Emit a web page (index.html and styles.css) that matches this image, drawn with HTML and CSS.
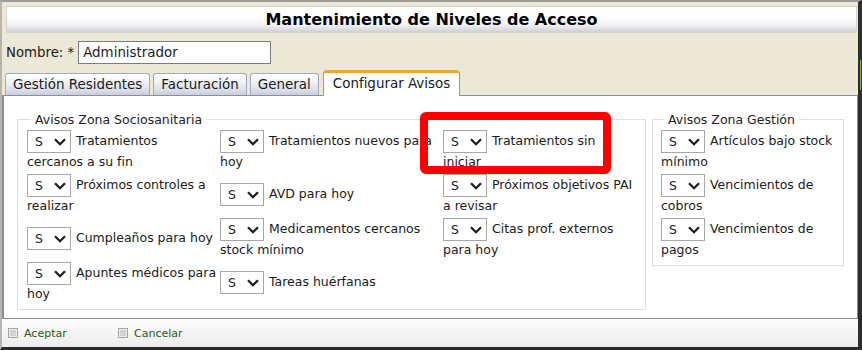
FILE: index.html
```html
<!DOCTYPE html>
<html lang="es">
<head>
    <meta charset="UTF-8">
    <title>Mantenimiento de Niveles de Acceso</title>
    <link rel="stylesheet" href="styles.css">
</head>
<body>
    <div class="window">
        <!-- Title -->
        <div class="titlebar">
            <h1>Mantenimiento de Niveles de Acceso</h1>
        </div>

        <!-- Nombre -->
        <div class="name-row">
            <label for="nombre">Nombre: *</label>
            <input id="nombre" type="text" value="Administrador">
        </div>

        <!-- Tabs -->
        <div class="tabs">
            <span class="tab">Gestión Residentes</span>
            <span class="tab">Facturación</span>
            <span class="tab">General</span>
            <span class="tab active">Configurar Avisos</span>
        </div>

        <!-- Tab content -->
        <div class="panel">
            <fieldset class="zone zone-socio">
                <legend>Avisos Zona Sociosanitaria</legend>
                <table class="alerts">
                    <colgroup>
                        <col class="c1"><col class="c2"><col class="c3">
                    </colgroup>
                    <tr>
                        <td><span class="sel"><select><option>S</option><option>N</option></select><svg width="12" height="8" viewBox="0 0 12 8"><path d="M1 1.2 L6 6.2 L11 1.2"/></svg></span> Tratamientos cercanos a su fin</td>
                        <td><span class="sel"><select><option>S</option><option>N</option></select><svg width="12" height="8" viewBox="0 0 12 8"><path d="M1 1.2 L6 6.2 L11 1.2"/></svg></span> Tratamientos nuevos para hoy</td>
                        <td><span class="sel"><select><option>S</option><option>N</option></select><svg width="12" height="8" viewBox="0 0 12 8"><path d="M1 1.2 L6 6.2 L11 1.2"/></svg></span> Tratamientos sin iniciar</td>
                    </tr>
                    <tr>
                        <td><span class="sel"><select><option>S</option><option>N</option></select><svg width="12" height="8" viewBox="0 0 12 8"><path d="M1 1.2 L6 6.2 L11 1.2"/></svg></span> Próximos controles a realizar</td>
                        <td><span class="sel"><select><option>S</option><option>N</option></select><svg width="12" height="8" viewBox="0 0 12 8"><path d="M1 1.2 L6 6.2 L11 1.2"/></svg></span> AVD para hoy</td>
                        <td><span class="sel"><select><option>S</option><option>N</option></select><svg width="12" height="8" viewBox="0 0 12 8"><path d="M1 1.2 L6 6.2 L11 1.2"/></svg></span> Próximos objetivos PAI a revisar</td>
                    </tr>
                    <tr>
                        <td><span class="sel"><select><option>S</option><option>N</option></select><svg width="12" height="8" viewBox="0 0 12 8"><path d="M1 1.2 L6 6.2 L11 1.2"/></svg></span> Cumpleaños para hoy</td>
                        <td><span class="sel"><select><option>S</option><option>N</option></select><svg width="12" height="8" viewBox="0 0 12 8"><path d="M1 1.2 L6 6.2 L11 1.2"/></svg></span> Medicamentos cercanos stock mínimo</td>
                        <td><span class="sel"><select><option>S</option><option>N</option></select><svg width="12" height="8" viewBox="0 0 12 8"><path d="M1 1.2 L6 6.2 L11 1.2"/></svg></span> Citas prof. externos para hoy</td>
                    </tr>
                    <tr>
                        <td><span class="sel"><select><option>S</option><option>N</option></select><svg width="12" height="8" viewBox="0 0 12 8"><path d="M1 1.2 L6 6.2 L11 1.2"/></svg></span> Apuntes médicos para hoy</td>
                        <td><span class="sel"><select><option>S</option><option>N</option></select><svg width="12" height="8" viewBox="0 0 12 8"><path d="M1 1.2 L6 6.2 L11 1.2"/></svg></span> Tareas huérfanas</td>
                        <td></td>
                    </tr>
                </table>
            </fieldset>

            <fieldset class="zone zone-gestion">
                <legend>Avisos Zona Gestión</legend>
                <table class="alerts">
                    <tr>
                        <td><span class="sel"><select><option>S</option><option>N</option></select><svg width="12" height="8" viewBox="0 0 12 8"><path d="M1 1.2 L6 6.2 L11 1.2"/></svg></span> Artículos bajo stock mínimo</td>
                    </tr>
                    <tr>
                        <td><span class="sel"><select><option>S</option><option>N</option></select><svg width="12" height="8" viewBox="0 0 12 8"><path d="M1 1.2 L6 6.2 L11 1.2"/></svg></span> Vencimientos de cobros</td>
                    </tr>
                    <tr>
                        <td><span class="sel"><select><option>S</option><option>N</option></select><svg width="12" height="8" viewBox="0 0 12 8"><path d="M1 1.2 L6 6.2 L11 1.2"/></svg></span> Vencimientos de pagos</td>
                    </tr>
                </table>
            </fieldset>
        </div>

        <!-- Footer -->
        <div class="footer">
            <a class="action" href="#"><span class="ico"></span>Aceptar</a>
            <a class="action" href="#"><span class="ico"></span>Cancelar</a>
        </div>
    </div>

    <!-- Highlight mark -->
    <div class="highlight"></div>
</body>
</html>
```

FILE: styles.css
```css
* {
    box-sizing: border-box;
}

body {
    margin: 0;
    position: relative;
    background: #ebe8d8;
    font-family: "DejaVu Sans", Verdana, sans-serif;
    color: #1a1a1a;
}

.window {
    position: relative;
    height: 350px;
    display: flex;
    flex-direction: column;
    border-top: 2px solid #9c9c9c;
    border-left: 2px solid #b8b6aa;
    border-right: 4px solid #2e2e2e;
    border-bottom: 3px solid #2a2a2a;
}

/* green mark on the right frame */
.window::after {
    content: "";
    position: absolute;
    right: -3px;
    top: 58px;
    width: 1px;
    height: 30px;
    background: #7cc11e;
}

.titlebar {
    margin: 4px 1px 0 4px;
    height: 27px;
    border: 1px solid #d6d4ca;
    background: linear-gradient(#ffffff 0%, #ffffff 45%, #eeeef0 75%, #cfd0d6 100%);
    display: flex;
    align-items: center;
    justify-content: center;
}

.titlebar h1 {
    margin: 0;
    font-size: 16px;
    font-weight: bold;
    color: #000;
}

.name-row {
    margin-top: 8px;
    padding-left: 4px;
    height: 23px;
    display: flex;
    align-items: center;
    font-size: 13.3px;
}

.name-row label {
    margin-right: 4px;
}

.name-row input {
    width: 193px;
    height: 23px;
    border: 1px solid #7c7c7c;
    padding: 0 4px;
    font-family: inherit;
    font-size: 13.4px;
    color: #1a1a1a;
    background: #fff;
}

/* Tabs */
.tabs {
    margin-top: 6px;
    height: 26px;
    padding-left: 3px;
    display: flex;
    align-items: flex-end;
    gap: 3px;
    border-bottom: 1px solid #8e8e8e;
    position: relative;
}

.tab {
    height: 22px;
    line-height: 21px;
    padding: 0 7px;
    font-size: 13.45px;
    border: 1px solid #a4a9bb;
    border-bottom: none;
    border-radius: 3px 3px 0 0;
    background: linear-gradient(#ffffff 0%, #eef0f6 45%, #d8dbe8 80%, #c9cddd 100%);
    color: #1a1a1a;
}

.tab.active {
    height: 26px;
    margin-bottom: -1px;
    margin-left: 1px;
    line-height: 22px;
    padding: 0 9px;
    background: #fff;
    border: 1px solid #9a9a9a;
    border-top: 3px solid #f6a52a;
    border-bottom: none;
    border-radius: 4px 4px 0 0;
}

.panel {
    flex: 1;
    background: #fff;
    border-left: 2px solid #8c8c8c;
    border-right: 1px solid #8c8c8c;
    border-bottom: 1px solid #8c8c8c;
    padding: 16px 0 0 13px;
    display: flex;
    align-items: flex-start;
    gap: 6px;
}

/* Fieldsets */
.zone {
    margin: 0;
    border: 1px solid #dedede;
    font-size: 12.5px;
}

.zone legend {
    line-height: 15px;
    color: #222;
}

.zone-socio {
    width: 629px;
    padding: 3px 8px 3px 9px;
}

.zone-socio legend {
    margin-left: 4px;
    padding: 0 4px;
}

.zone-gestion {
    width: 192px;
    padding: 3px 7px 3px 8px;
}

.zone-gestion legend {
    margin-left: 3px;
    padding: 0 4px;
}

.alerts {
    border-collapse: collapse;
    table-layout: fixed;
}

.zone-socio .alerts {
    width: 610px;
}

.zone-gestion .alerts {
    width: 175px;
}

.alerts .c1 { width: 193px; }
.alerts .c2 { width: 223px; }
.alerts .c3 { width: 194px; }

.alerts td {
    padding: 0 0 3px 0;
    vertical-align: middle;
    line-height: 18px;
}

.zone-socio td:nth-child(1) { padding-right: 3px; }
.zone-socio td:nth-child(2) { padding-right: 2px; }
.zone-socio td:nth-child(3) { padding-right: 1px; }

.sel {
    display: inline-block;
    position: relative;
    vertical-align: middle;
    margin-right: 1px;
}

.sel select {
    -webkit-appearance: none;
    appearance: none;
    display: block;
    width: 44px;
    height: 23px;
    border: 1px solid #a8a8a8;
    border-radius: 0;
    padding: 0 0 0 7px;
    background: #fff;
    font-family: inherit;
    font-size: 12.5px;
    color: #222;
}

.sel svg {
    position: absolute;
    right: 5px;
    top: 8px;
    pointer-events: none;
}

.sel svg path {
    fill: none;
    stroke: #1e1e1e;
    stroke-width: 2.3;
}

/* Footer */
.footer {
    height: 28px;
    display: flex;
    align-items: center;
    padding-left: 6px;
    background: linear-gradient(#fdfdfd, #ececec);
}

.action {
    display: flex;
    align-items: center;
    width: 110px;
    font-size: 11px;
    color: #2b5a19;
    text-decoration: none;
}

.ico {
    width: 10px;
    height: 10px;
    margin-right: 6px;
    border: 1px solid #a6a6a6;
    background: #d2d2d2;
    box-shadow: inset 0 0 0 1px #ececec;
}

/* Red annotation */
.highlight {
    position: absolute;
    left: 420px;
    top: 112px;
    width: 191px;
    height: 62px;
    border: 8px solid #ff0000;
    border-radius: 6px;
    pointer-events: none;
}
```
